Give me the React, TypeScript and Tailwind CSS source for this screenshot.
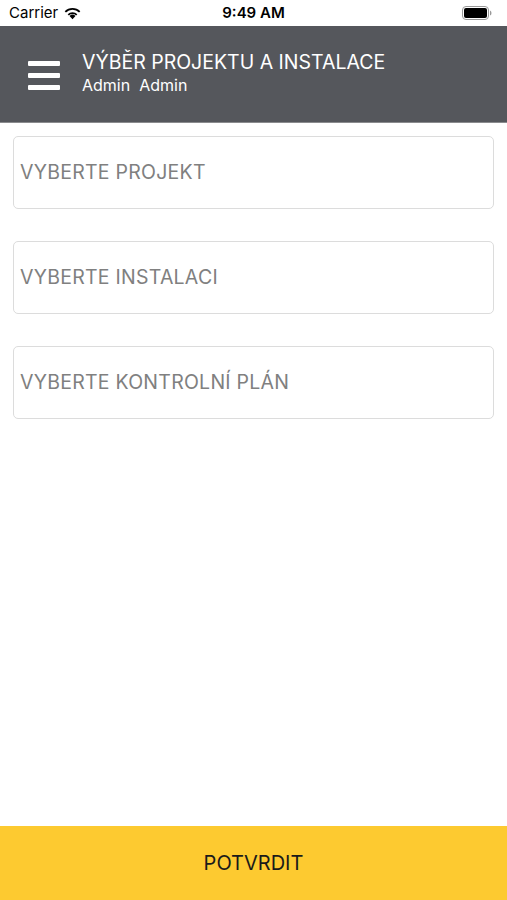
import React from "react";

function Wifi() {
  return (
    <svg width="19" height="14" viewBox="0 0 18 13" className="ml-[5px]">
      <path d="M9 12.5 L6.2 9.4 A4 4 0 0 1 11.8 9.4 Z" fill="#000" />
      <path d="M4.4 7.6 A6.6 6.6 0 0 1 13.6 7.6 L12.4 8.9 A4.9 4.9 0 0 0 5.6 8.9 Z" fill="#000" />
      <path d="M1.6 4.8 A10.5 10.5 0 0 1 16.4 4.8 L15.2 6.1 A8.7 8.7 0 0 0 2.8 6.1 Z" fill="#000" />
    </svg>
  );
}

function Battery() {
  return (
    <svg width="30" height="14" viewBox="0 0 30 14">
      <rect x="0.5" y="0.5" width="26" height="13" rx="3.5" fill="none" stroke="#999" />
      <rect x="2" y="2" width="23" height="10" rx="2" fill="#000" />
      <path d="M28 4.5 Q29.5 5 29.5 7 Q29.5 9 28 9.5 Z" fill="#999" />
    </svg>
  );
}

export default function App() {
  const items = ["VYBERTE PROJEKT", "VYBERTE INSTALACI", "VYBERTE KONTROLNÍ PLÁN"];
  return (
    <div className="w-[507px] h-[900px] bg-white flex flex-col relative" style={{ fontFamily: "Inter, 'Open Sans', sans-serif" }}>
      <div className="h-[26px] flex items-center px-[9px] relative text-[15px] text-black" style={{ fontFamily: "Inter, sans-serif" }}>
        <div className="flex items-center">
          <span>Carrier</span>
          <Wifi />
        </div>
        <div className="absolute left-0 right-0 text-center font-semibold pointer-events-none">9:49 AM</div>
        <div className="ml-auto mr-[6px] flex items-center">
          <Battery />
        </div>
      </div>
      <div className="h-[97px] bg-[#55575c] flex items-center pl-[28px] border-b border-[#8a8b8e]">
        <div className="flex flex-col gap-[7px] w-[32px] mt-[2px]">
          <div className="h-[5px] bg-white rounded-[1px]" />
          <div className="h-[5px] bg-white rounded-[1px]" />
          <div className="h-[5px] bg-white rounded-[1px]" />
        </div>
        <div className="ml-[22px] flex flex-col text-white mt-[-3px]">
          <div className="text-[19.5px] leading-[24px]">VÝBĚR PROJEKTU A INSTALACE</div>
          <div className="text-[16px] leading-[20px] mt-[1px] whitespace-pre">Admin  Admin</div>
        </div>
      </div>
      <div className="flex flex-col gap-[32px] px-[13px] pt-[13px]">
        {items.map((t) => (
          <div key={t} className="h-[73px] border border-[#dcdcdc] rounded-[5px] flex items-center pl-[6px]">
            <span className="text-[19.5px] tracking-[0.25px] text-[#808080] mt-[1px]" style={{ fontFamily: "Inter, sans-serif" }}>{t}</span>
          </div>
        ))}
      </div>
      <div className="mt-auto h-[74px] bg-[#fdca30] flex items-center justify-center">
        <span className="text-[20px] text-[#1a1a1a]">POTVRDIT</span>
      </div>
    </div>
  );
}
